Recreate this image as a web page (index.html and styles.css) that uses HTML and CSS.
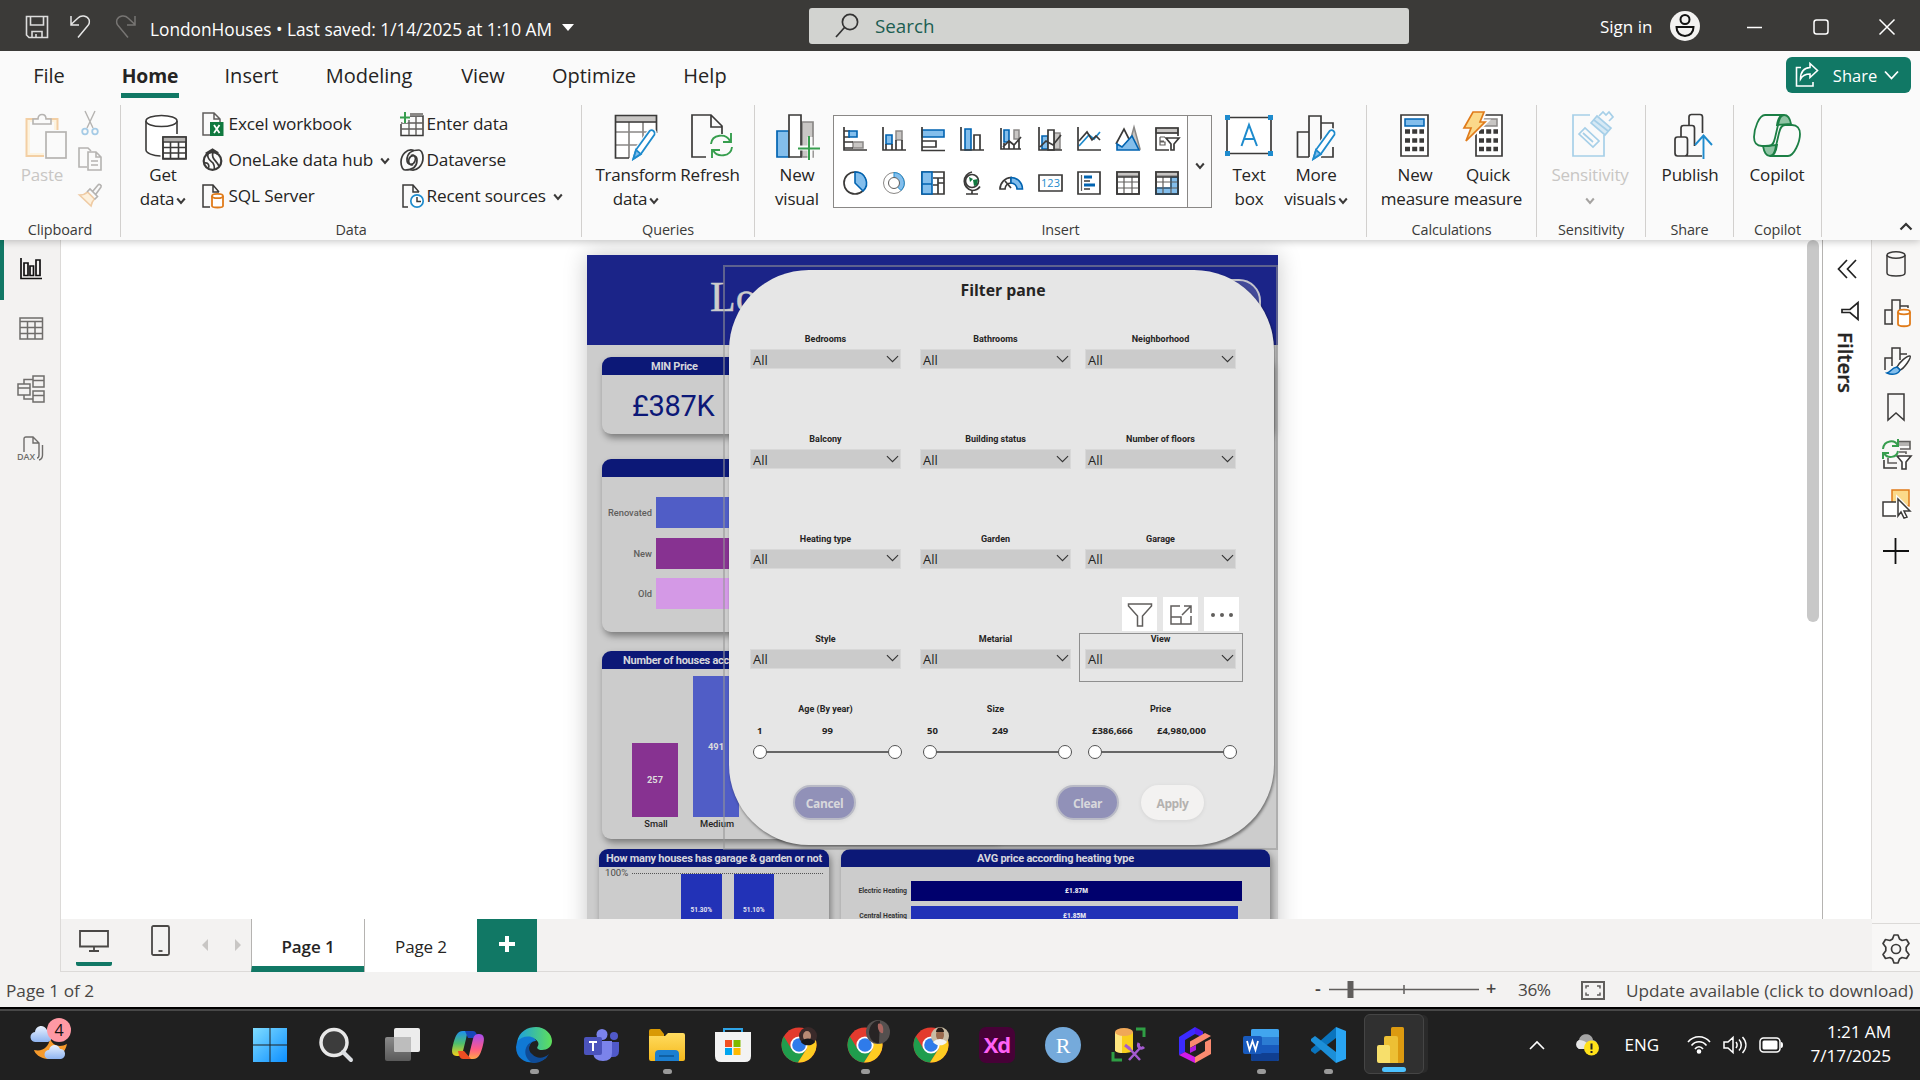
FILE: index.html
```html
<!DOCTYPE html>
<html lang="en">
<head>
<meta charset="utf-8">
<title>LondonHouses</title>
<link rel="stylesheet" href="styles.css">
</head>
<body>
<svg width="0" height="0" class="defs">
  <defs>
    <symbol id="chev" viewBox="0 0 10 8"><path d="M1.200 1.500 5 6l3.800-4.500" fill="none" stroke="currentColor" stroke-width="2"/></symbol>
    <symbol id="drop" viewBox="0 0 14 8"><path d="M1 .8 7 6.800l6-6" fill="none" stroke="#333" stroke-width="1.200"/></symbol>
    <symbol id="chrome" viewBox="0 0 36 36">
      <circle cx="18" cy="18" r="17.500" fill="#e33b2e"/>
      <path d="M2.800 9.300A17.500 17.500 0 0 0 17 35.500L25.500 22l-15 0z" fill="#1f9d4d"/>
      <path d="M33.200 9.500A17.500 17.500 0 0 1 17 35.500l8.600-13.400L26 9.500z" fill="#fdcc22"/>
      <circle cx="18" cy="18" r="8.600" fill="#fff"/><circle cx="18" cy="18" r="6.800" fill="#2f7bea"/>
    </symbol>
    <symbol id="pencil" viewBox="0 0 24 32"><path d="M2 30 4.500 21.500 17.500 3.500a3 3 0 0 1 4.400 3.600L9 25.500z" fill="#fafafa" stroke="#fafafa" stroke-width="4"/><path d="M2 30 4.500 21.500 17.500 3.500a3 3 0 0 1 4.400 3.600L9 25.500z" fill="#fff" stroke="#1e8bcd" stroke-width="1.700"/><path d="M2 30l2.500-8.500L9 25.500z" fill="#83beec" stroke="#1e8bcd"/></symbol>
    <linearGradient id="gw" x1="0" y1="0" x2="1" y2="1"><stop offset="0" stop-color="#7fdcff"/><stop offset="1" stop-color="#0d8fff"/></linearGradient>
    <linearGradient id="ge" x1="0" y1="0" x2="1" y2="0"><stop offset="0" stop-color="#1c9fe0"/><stop offset="1" stop-color="#5fe05a"/></linearGradient>
    <linearGradient id="gf" x1="0" y1="0" x2="0" y2="1"><stop offset="0" stop-color="#ffdc60"/><stop offset="1" stop-color="#f5b91c"/></linearGradient>
    <linearGradient id="gc1" x1="0" y1="0" x2="0" y2="1"><stop offset="0" stop-color="#1d8ff0"/><stop offset=".5" stop-color="#4fbf6c"/><stop offset="1" stop-color="#f5d119"/></linearGradient>
    <linearGradient id="gc2" x1="0" y1="0" x2="0" y2="1"><stop offset="0" stop-color="#a54df0"/><stop offset=".6" stop-color="#ff5a86"/><stop offset="1" stop-color="#ffa648"/></linearGradient>
    <linearGradient id="gcloud" x1="0" y1="0" x2="0" y2="1"><stop offset="0" stop-color="#e8f2ff"/><stop offset="1" stop-color="#8fb4f0"/></linearGradient>
    <linearGradient id="gtask" x1="0" y1="0" x2="0" y2="1"><stop offset="0" stop-color="#8a8a8a"/><stop offset="1" stop-color="#5a5a5a"/></linearGradient>
  </defs>
</svg>

<header class="titlebar">
  <div class="quick">
    <svg width="24" height="24" viewBox="0 0 24 24" fill="none" stroke="#dcdcdc" stroke-width="1.600"><path d="M1.500 1.500h21v21H4l-2.500-2.500z M5.500 1.500v8.500h13V1.500 M7 22.500v-6h10v6 M11 22v-3"/></svg>
    <svg width="24" height="24" viewBox="0 0 24 24" fill="none" stroke="#e6e6e6" stroke-width="1.500"><path d="M2 1v9h8 M2 9.500 9 3C12-.3 18 .5 20 4.500c1 3 0 5-1.500 6.500L9 22.500"/></svg>
    <svg width="24" height="24" viewBox="0 0 24 24" fill="none" stroke="#777573" stroke-width="1.500"><path d="M22 1v9h-8 M22 9.500 15 3C12-.3 6 .5 4 4.500c-1 3 0 5 1.500 6.500L15 22.500"/></svg>
  </div>
  <div class="doc-name">LondonHouses • Last saved: 1/14/2025 at 1:10 AM</div>
  <svg class="doc-caret" width="12" height="8"><path d="M0 0h12L6 7z" fill="#fff"/></svg>
  <div class="search">
    <svg width="26" height="26" viewBox="0 0 26 26" fill="none" stroke="#333" stroke-width="1.700"><circle cx="16" cy="9" r="7.600"/><path d="M10.500 14.500 2 24"/></svg>
    <span>Search</span>
  </div>
  <div class="signin">Sign in</div>
  <svg class="avatar" width="30" height="30" viewBox="0 0 30 30"><circle cx="15" cy="15" r="15" fill="#f3f2f1"/><g fill="none" stroke="#111" stroke-width="2"><circle cx="15" cy="8.500" r="4.500"/><path d="M6.500 16h17c0 5.500-3.500 9-8.500 9s-8.500-3.500-8.500-9z"/></g></svg>
  <div class="winbtns">
    <svg width="16" height="18"><path d="M0 9.500h15" stroke="#fff" stroke-width="1.500"/></svg>
    <svg width="16" height="18"><rect x="1" y="2" width="14" height="14" rx="2.500" fill="none" stroke="#fff" stroke-width="1.500"/></svg>
    <svg width="16" height="18"><path d="M.5 1.500l15 15M15.500 1.500.5 16.500" stroke="#fff" stroke-width="1.500"/></svg>
  </div>
</header>

<nav class="tabs">
  <a>File</a><a class="on"><span>Home</span></a><a>Insert</a><a>Modeling</a><a>View</a><a>Optimize</a><a>Help</a>
  <div class="share">
    <svg width="24" height="26" viewBox="0 0 24 26" fill="none" stroke="#fff" stroke-width="1.600"><path d="M6 5.500H1.500V24H18v-4"/><path d="M15 1.500l7.500 7L15 15.500V12c-5 0-7.500 1.500-9.500 5 0-6.500 3-11 9.500-11.500z"/></svg>
    <span>Share</span>
    <svg width="15" height="10"><path d="M1 1.500 7.500 8.500 14 1.500" fill="none" stroke="#fff" stroke-width="1.800"/></svg>
  </div>
</nav>

<section class="ribbon">
  <div class="group g-clip">
    <div class="tools">
      <div class="big off w72">
        <svg class="nudge" width="48" height="48" viewBox="0 0 48 48" fill="none"><path d="M5.500 8h31v37h-31z" fill="#fdf3df" stroke="#f3cfa4" stroke-width="2"/><path d="M9 11h24v31H9z" fill="#fafafa"/><path d="M12 13V8h5c0-6 8-6 8 0h5v5z" fill="#fafafa" stroke="#b5b3b1" stroke-width="1.600"/><path d="M23 19h24v29H23z" fill="#fafafa"/><rect x="25" y="21" width="20" height="26" fill="#fafafa" stroke="#b5b3b1" stroke-width="1.700"/></svg>
        <span>Paste</span>
      </div>
      <div class="minis">
        <svg width="24" height="24" viewBox="0 0 24 24" fill="none" stroke="#b5b3b1" stroke-width="1.400"><path d="M7 0l8 17M17 0 9 17"/><circle cx="7" cy="20.500" r="2.800" stroke="#a6cbe6" stroke-width="1.800"/><circle cx="17" cy="20.500" r="2.800" stroke="#a6cbe6" stroke-width="1.800"/></svg>
        <svg width="24" height="24" viewBox="0 0 24 24" fill="none" stroke="#b5b3b1" stroke-width="1.600"><path d="M9 20H1V1h9l3 3"/><path d="M10 5h8l5 5v13H10zM18 5v5h5M13 14h7M13 18h7" fill="#fafafa"/></svg>
        <svg width="24" height="24" viewBox="0 0 24 24" fill="none" stroke="#b5b3b1" stroke-width="1.600"><path d="M1.500 12c4 0 6-1 8-3l7 7c-2 2-3 4-3.500 7z" fill="#fdf0dc" stroke="#efcba4"/><path d="M9 9l3-3 7.500 7.500-3 3M15 8l5-6c1-1.500 4 0 3 2l-5 7"/></svg>
      </div>
    </div>
    <div class="gname">Clipboard</div>
  </div>

  <div class="group g-data">
    <div class="tools">
      <div class="big w72">
        <svg class="nudge" width="48" height="48" viewBox="0 0 48 48" fill="none" stroke="#3b3a39" stroke-width="1.600"><path d="M4 10v29c0 3 7 6 14.500 6h16.500V10" fill="#fff" stroke="none"/><path d="M35 23V10M4 10v29c0 3 7 6 14.500 6"/><ellipse cx="19.500" cy="10" rx="15.500" ry="5.500" fill="#fff"/><path d="M21 26h23v22H21z" fill="#fff"/><path d="M21 28.500h23" stroke="#b5b3b1" stroke-width="4"/><path d="M21 26h23v21.500H21zM21 31h23M21 36.500h23M21 42h23M28.500 31v17M36.500 31v17"/></svg>
        <span>Get</span><span>data<svg class="chev"><use href="#chev"/></svg></span>
      </div>
      <div class="rows">
        <div class="row"><svg width="24" height="24" viewBox="0 0 24 24" fill="none"><path d="M8 23H1V1h11l6 6v3M12 1v6h6" stroke="#605e5c" stroke-width="1.500"/><path d="M8 10h13.500v14H8z" fill="#10793f"/><path d="M12 13l5.500 8M17.500 13 12 21" stroke="#fff" stroke-width="1.800"/></svg><span>Excel workbook</span></div>
        <div class="row"><svg width="24" height="24" viewBox="0 0 24 24" fill="none" stroke="#3b3a39"><path d="M5 4h18v19.500H1V12" stroke-width="1.500"/><path d="M10 2.500h13" stroke="#8a8886" stroke-width="3"/><path d="M1 11h22M1 17h22M9 6v17M16 5v18" stroke="#605e5c" stroke-width="1.400"/><path d="M5 0v11M0 5.500h10" stroke="#fafafa" stroke-width="5"/><path d="M5 0v11M0 5.500h10" stroke="#379e4e" stroke-width="2"/></svg><span>Enter data</span></div>
        <div class="row"><svg width="24" height="24" viewBox="0 0 24 24" fill="none" stroke="#3b3a39"><circle cx="10.500" cy="13" r="8.800" stroke-width="2.200"/><path d="M4 6l6.500-4 5.500 3.500" stroke-width="3"/><path d="M6 5c-1.500 7 3.500 8 5 10 1 1.500 1.500 4 1.500 6M11 4c-2 7 3 8 6 14M2.500 15c4-1 5 3 4 5" stroke-width="1.700"/></svg><span>OneLake data hub<svg class="chev"><use href="#chev"/></svg></span></div>
        <div class="row"><svg width="24" height="24" viewBox="0 0 24 24" fill="none" stroke="#3b3a39" stroke-width="1.700"><path d="M14 2.500C7 0 1 7 1 14c0 5 2 8 4 8 8 0 12-4 12-10 0-5-6-6-8-1-1.500 4 1 7 4 5.500"/><path d="M10 21.500c7 2.500 13-4.500 13-11.500 0-5-2-8-4-8-8 0-12 4-12 10 0 5 6 6 8 1 1.500-4-1-7-4-5.500"/></svg><span>Dataverse</span></div>
        <div class="row"><svg width="24" height="24" viewBox="0 0 24 24" fill="none"><path d="M8 23H1V1h10l6 7M11 1v7h6" stroke="#3b3a39" stroke-width="1.500"/><path d="M10 12v10c0 2 11 2 11 0V12" fill="#fff" stroke="#e07b1a" stroke-width="1.800"/><ellipse cx="15.500" cy="12" rx="5.500" ry="2.200" fill="#fff" stroke="#e07b1a" stroke-width="1.800"/></svg><span>SQL Server</span></div>
        <div class="row"><svg width="24" height="24" viewBox="0 0 24 24" fill="none"><path d="M8 23H3V1h10l6 7M13 1v7h6" stroke="#3b3a39" stroke-width="1.500"/><circle cx="17" cy="17" r="6.200" fill="#fff" stroke="#1e8bcd" stroke-width="1.700"/><path d="M17 13v4.500h4" stroke="#3b3a39" stroke-width="1.500"/></svg><span>Recent sources<svg class="chev"><use href="#chev"/></svg></span></div>
      </div>
    </div>
    <div class="gname">Data</div>
  </div>

  <div class="group g-query">
    <div class="tools">
      <div class="big w88">
        <svg width="48" height="48" viewBox="0 0 48 48" fill="none" stroke="#3b3a39" stroke-width="1.700"><path d="M3.500 4.500h41V47h-41z" fill="#fff" stroke="none"/><path d="M3.500 8h41" stroke="#c8c6c4" stroke-width="7"/><path d="M3.500 21h41M3.500 34h30M17 11v36M31 11v26" stroke="#8a8886"/><path d="M44.500 22V4.500h-41V47H17M3.500 11h41"/><path d="M22 48h24V24z" fill="#fafafa" stroke="none"/><use href="#pencil" x="16" y="16" width="32" height="34"/></svg>
        <span>Transform</span><span>data<svg class="chev"><use href="#chev"/></svg></span>
      </div>
      <div class="big w62">
        <svg width="48" height="48" viewBox="0 0 48 48" fill="none" stroke="#3b3a39" stroke-width="1.700"><path d="M20 46H6V4h19l11 11v8M25 4v12h11"/><path d="M25 33c1-10 15-11 19-3M46 36c-1 10-15 11-19 3M45 22v9h-8M26 47v-8h8" stroke="#379e4e" stroke-width="1.900"/></svg>
        <span>Refresh</span>
      </div>
    </div>
    <div class="gname">Queries</div>
  </div>

  <div class="group g-insert">
    <div class="tools">
      <div class="big w72">
        <svg width="48" height="48" viewBox="0 0 48 48" fill="none" stroke="#3b3a39" stroke-width="1.700"><path d="M29 11h11v35H29z" fill="#c8c6c4" stroke="#8a8886"/><path d="M4 20h12v26H4z" fill="#83beec" stroke="#0063b1"/><path d="M16 4h12v42H16z" fill="#fff"/><path d="M37 26v22M26 37h21" stroke="#fafafa" stroke-width="5"/><path d="M36 25v24M25 37.500h22" stroke="#379e4e" stroke-width="2"/></svg>
        <span>New</span><span>visual</span>
      </div>
      <div class="gallery">
        <div class="gallery-grid">
          <svg viewBox="0 0 24 24"><path d="M7 4H1M7 10H1" class="d"/><path d="M6 4h8v6H6z" class="b"/><path d="M10 15h10v6H10z" class="g"/><path d="M10 15H1M10 21H1M1 0v23h23" class="d"/></svg>
          <svg viewBox="0 0 24 24"><path d="M4 8h6v9H4z" class="b"/><path d="M14 4h6v9h-6z" class="g"/><path d="M4 17v6M10 17v6M14 13v10M20 13v10M1 0v23h23" class="d"/></svg>
          <svg viewBox="0 0 24 24"><path d="M1 3h22v7H1z" class="b"/><path d="M1 14h14v6H1zM1 0v23.500h23" class="d"/></svg>
          <svg viewBox="0 0 24 24"><path d="M5 2h6v21H5z" class="b"/><path d="M14 8h6v15h-6zM1 0v23h23" class="d"/></svg>
          <svg viewBox="0 0 24 24"><path d="M5 3h5v12H5z" class="b"/><path d="M15 3h5v9h-5z" class="g"/><path d="M2 1v21h20M5 16v6M10 15v7M15 18v4M20 12v10M4 20l6-6 5 4 7-8" class="d"/></svg>
          <svg viewBox="0 0 24 24"><path d="M4 9h6v13H4z" class="b"/><path d="M16 6h6v16h-6z" class="g"/><path d="M10 3h6v20h-6z" class="d" fill="#fff"/><path d="M1 0v23h23M2 20l6-6 7 4 8-10" class="d"/></svg>
          <svg viewBox="0 0 24 24"><path d="M2 19 12 8l5 4 6-7" class="lb"/><path d="M2 14 10 5l5 8 4-4 4 4" class="d"/><path d="M1 0v23h23" class="d"/></svg>
          <svg viewBox="0 0 24 24"><path d="M18 0l6 22H12z" class="g"/><path d="M0 17 8 2l9 18" class="d" fill="#fff"/><path d="M1 23V17l5 3L16 9l7 14z" class="b"/></svg>
          <svg viewBox="0 0 24 24"><path d="M1 1h22v5H1z" class="g"/><path d="M14 23H1V1h22v8M1 6h22" class="d"/><path d="M5 10h5M5 10v4h4M5 18h5v-3H5z" class="d thin"/><path d="M11 11h13l-5 6v6h-3v-6z" class="d" fill="#fff"/></svg>
          <svg viewBox="0 0 24 24"><circle cx="12" cy="12" r="11" class="d" fill="#fff"/><path d="M12 12V1a11 11 0 0 1 8 19z" class="b"/></svg>
          <svg viewBox="0 0 24 24"><circle cx="12" cy="12" r="10.500" fill="#fff" stroke="#8a8886"/><path d="M12 1.500a10.500 10.500 0 0 1 7 18l-4-4A5.500 5.500 0 0 0 12 6.500z" fill="#83beec" stroke="#1e8bcd"/><circle cx="12" cy="12" r="5.500" fill="#fff" stroke="#605e5c"/></svg>
          <svg viewBox="0 0 24 24"><path d="M1 1h22v22H1z" class="d" fill="#fff"/><path d="M1 1h10v22H1zM1 13h10" class="b"/><path d="M12 7h11M17 7v16M12 14h5M17 12h6" class="d"/></svg>
          <svg viewBox="0 0 24 24"><circle cx="12" cy="10" r="6.500" class="d" fill="#fff"/><path d="M9 6l4 2-3 3zM13 9l5-1-1 6-3 1z" fill="#10793f"/><path d="M12 1a10 9.500 0 0 0 0 18.500c4 0 6-1 8-4M12 19v4M6 23h12" class="d"/></svg>
          <svg viewBox="0 0 24 24"><path d="M1 18A11.500 11.500 0 0 1 12 6.500v5.500a6 6 0 0 0-6 6z" class="d" fill="#fff"/><path d="M12 6.500A11.500 11.500 0 0 1 23.500 18H18a6 6 0 0 0-6-6z" class="b"/><path d="M12 17 6 10" class="d"/></svg>
          <svg viewBox="0 0 24 24"><path d="M1 4h23v16H1z" class="d" fill="#fff"/><text x="12.500" y="16" class="t123">123</text></svg>
          <svg viewBox="0 0 24 24"><path d="M1 1h22v22H1z" class="d" fill="#fff"/><path d="M4.500 4v16" class="d thin"/><path d="M7 6h8M7 14h11" stroke="#0063b1" stroke-width="3"/><path d="M7 10h6M7 18h6" stroke="#3b3a39" stroke-width="1.500"/></svg>
          <svg viewBox="0 0 24 24"><path d="M1 1h22v22H1z" class="d" fill="#fff"/><path d="M1 1h22v4H1z" class="g"/><path d="M1 11h22M1 17h22M8 6v17M16 6v17" class="d thin"/><path d="M1 6h22M1 1h22v22H1z" class="d"/></svg>
          <svg viewBox="0 0 24 24"><path d="M1 1h22v22H1z" class="d" fill="#fff"/><path d="M16 6h7v17H1v-6h15z" class="b"/><path d="M1 1h22v4H1z" class="g"/><path d="M1 11h22M1 17h22M8 6v17M16 6v17" class="d thin"/><path d="M1 6h22M1 1h22v22H1z" class="d"/></svg>
        </div>
        <div class="gallery-more"><svg class="chev"><use href="#chev"/></svg></div>
      </div>
      <div class="big w74">
        <svg width="48" height="48" viewBox="0 0 48 48" fill="none"><path d="M2 6.500h44v36H2z" fill="#fff" stroke="#3b3a39" stroke-width="1.700"/><path d="M0 4h5v5H0zM43 4h5v5h-5zM0 40h5v5H0zM43 40h5v5h-5z" fill="#1e8bcd"/><path d="M16.500 35 24 14l8 21M19 28h10.500" stroke="#1e8bcd" stroke-width="2"/></svg>
        <span>Text</span><span>box</span>
      </div>
      <div class="big w60">
        <svg class="nudge" width="48" height="48" viewBox="0 0 48 48" fill="none" stroke="#3b3a39" stroke-width="1.700"><path d="M14 46V5h12v30M14 21H2.500v25H14M26 12h12v8M26 46h12V36"/><use href="#pencil" x="13" y="16" width="32" height="34"/></svg>
        <span>More</span><span>visuals<svg class="chev"><use href="#chev"/></svg></span>
      </div>
    </div>
    <div class="gname">Insert</div>
  </div>

  <div class="group g-calc">
    <div class="tools">
      <div class="big w72">
        <svg width="48" height="48" viewBox="0 0 48 48" fill="none"><path d="M10 4h27v41H10z" fill="#fff" stroke="#3b3a39" stroke-width="1.700"/><path d="M14 8h19v7H14z" fill="#83beec" stroke="#0063b1" stroke-width="1.500"/><path d="M14 20.500h19M14 29.500h19M14 38h19" stroke="#3b3a39" stroke-width="4.500" stroke-dasharray="5 2.200"/></svg>
        <span>New</span><span>measure</span>
      </div>
      <div class="big w74">
        <svg width="48" height="48" viewBox="0 0 48 48" fill="none"><path d="M12 4h26v41H12z" fill="#fff" stroke="#3b3a39" stroke-width="1.700"/><path d="M17 8h16v7H15z" fill="#c8c6c4" stroke="#8a8886" stroke-width="1.500"/><path d="M15 20.500h19M15 29.500h19M15 38h19" stroke="#3b3a39" stroke-width="4.500" stroke-dasharray="5 2.200"/><path d="M9 1h11l-4 10h5L2 30l5-13H0z" fill="#fbd98a" stroke="#fafafa" stroke-width="5"/><path d="M9 1h11l-4 10h5L2 30l5-13H0z" fill="#fbd98a" stroke="#e07b1a" stroke-width="1.700"/></svg>
        <span>Quick</span><span>measure</span>
      </div>
    </div>
    <div class="gname">Calculations</div>
  </div>

  <div class="group g-sens">
    <div class="tools">
      <div class="big off w88">
        <svg width="48" height="48" viewBox="0 0 48 48" fill="none" stroke="#a6cfe8" stroke-width="1.700"><path d="M24 4H7v41h31V24"/><path d="M13 23l6-6 14 13-6 6zM17 22l10 9"/><path d="M25 12l6-7 14 12-6 7zM28 9l14 11" fill="#d6e9f5"/><path d="M33 5l4-4 3 3 3-3 4 5-4 4"/></svg>
        <span>Sensitivity</span><span><svg class="chev"><use href="#chev"/></svg></span>
      </div>
    </div>
    <div class="gname">Sensitivity</div>
  </div>

  <div class="group g-pub">
    <div class="tools">
      <div class="big w72">
        <svg width="48" height="48" viewBox="0 0 48 48" fill="none" stroke="#3b3a39" stroke-width="1.700"><path d="M9 28.500q0-2.500 2.500-2.500H19q2.500 0 2.500 2.500V42M15 26V17q0-2.500 2.500-2.500H26q2.500 0 2.500 2.500v18M23 14V6q0-2.500 2.500-2.500H34q2.500 0 2.500 2.500v16M9 28v14q0 3 2.500 3H36M21.500 42q0 3-2.500 3"/><path d="M37.500 48V25M29 34l8.500-9.500L46 34" stroke="#1e8bcd" stroke-width="1.900"/></svg>
        <span>Publish</span>
      </div>
    </div>
    <div class="gname">Share</div>
  </div>

  <div class="group g-cop">
    <div class="tools">
      <div class="big w72">
        <svg width="48" height="48" viewBox="0 0 48 48" fill="none" stroke="#1c7f45" stroke-width="1.800"><path d="M24 14C25 7 27 4 31 4c4 0 6 3 7 9z" fill="#8fc4a4"/><path d="M24 34C23 42 21 45 17 45c-4 0-6-4-7-10z" fill="#8fc4a4"/><path d="M31 4H12C6 4 1 18 1 26c0 6 3 9 8 9h7c4 0 5-4 6-8l3-13c1-6 3-10 6-10z"/><path d="M17 45h18c6 0 12-14 12-22 0-6-3-9-8-9h-7c-4 0-5 4-6 8l-3 13c-1 6-3 10-6 10z"/></svg>
        <span>Copilot</span>
      </div>
    </div>
    <div class="gname">Copilot</div>
  </div>
  <div class="collapse"><svg width="14" height="9"><path d="M1.500 7.500 7 2l5.500 5.500" fill="none" stroke="#333" stroke-width="2.200"/></svg></div>
</section>

<main class="work">
  <aside class="rail-left">
    <div class="view on"><svg width="22" height="22" viewBox="0 0 22 22" fill="none" stroke="#111" stroke-width="1.700"><path d="M1 0v20.500h21M4 5h4v12.500H4zM10 8h3.500v9.500H10zM16 2h4v15.500h-4z"/></svg></div>
    <div class="view"><svg width="24" height="24" viewBox="0 0 24 24" fill="none" stroke="#6f6d6b" stroke-width="1.500"><path d="M1 1h22.500v21H1zM1 4.500h22.500M1 10.500h22.500M1 16.500h22.500M8.500 4.500v17.500M16 4.500v17.500"/></svg></div>
    <div class="view"><svg width="28" height="28" viewBox="0 0 28 28" fill="none" stroke="#6f6d6b" stroke-width="1.500"><path d="M16 1h11v11H16zM16 5.500h11M16 16h11v11H16zM16 20.500h11M1 9h12v11H1zM1 13h12M7 9V4.500h9M7 20v4h9"/></svg></div>
    <div class="view"><svg width="28" height="26" viewBox="0 0 28 26" fill="none" stroke="#6f6d6b" stroke-width="1.400"><path d="M7 16V3q0-2 2-2h7l6 6v12q0 3-2 3M16 1v6h6M25.500 9v10q0 4-3.500 5"/><text x="0" y="24" class="dax">DAX</text></svg></div>
  </aside>

  <div class="stage">
    <div class="viewport">
      <div class="canvas">
        <div class="report">
          <div class="banner"><span>London houses</span><i class="banner-btn"></i></div>
          <div class="cards">
            <div class="card min"><h4>MIN Price</h4><div class="kpi">£387K</div></div>
            <div class="card state"><h4></h4>
              <div class="hbars">
                <span>Renovated</span><i class="c1"></i><span>New</span><i class="c2"></i><span>Old</span><i class="c3"></i>
              </div>
            </div>
            <div class="card size"><h4><span>Number of houses according</span></h4>
              <div class="cols"><div><b class="v1">257</b><span>Small</span></div><div><b class="v2">491</b><span>Medium</span></div></div>
            </div>
          </div>
          <div class="bottom">
            <div class="card garage"><h4>How many houses has garage &amp; garden or not</h4>
              <div class="pct"><span class="axis">100%</span><div class="plot"><b>51.30%</b><b>51.10%</b></div></div>
            </div>
            <div class="card heat"><h4>AVG price according heating type</h4>
              <div class="heat-rows">
                <span>Electric Heating</span><b class="h1">£1.87M</b>
                <span>Central Heating</span><b class="h2">£1.85M</b>
              </div>
            </div>
          </div>
          <div class="selection"></div>
          <div class="pane">
            <h3>Filter pane</h3>
            <div class="slicers">
              <div class="sl"><span>Bedrooms</span><div>All<svg><use href="#drop"/></svg></div></div>
              <div class="sl"><span>Bathrooms</span><div>All<svg><use href="#drop"/></svg></div></div>
              <div class="sl"><span>Neighborhood</span><div>All<svg><use href="#drop"/></svg></div></div>
              <div class="sl"><span>Balcony</span><div>All<svg><use href="#drop"/></svg></div></div>
              <div class="sl"><span>Building status</span><div>All<svg><use href="#drop"/></svg></div></div>
              <div class="sl"><span>Number of floors</span><div>All<svg><use href="#drop"/></svg></div></div>
              <div class="sl"><span>Heating type</span><div>All<svg><use href="#drop"/></svg></div></div>
              <div class="sl"><span>Garden</span><div>All<svg><use href="#drop"/></svg></div></div>
              <div class="sl"><span>Garage</span><div>All<svg><use href="#drop"/></svg></div></div>
              <div class="sl"><span>Style</span><div>All<svg><use href="#drop"/></svg></div></div>
              <div class="sl"><span>Metarial</span><div>All<svg><use href="#drop"/></svg></div></div>
              <div class="sl hovered"><span>View</span><div>All<svg><use href="#drop"/></svg></div>
                <div class="hover-tools">
                  <i><svg width="26" height="26" viewBox="0 0 26 26" fill="none" stroke="#605e5c" stroke-width="1.500"><path d="M1.500 3h23v2l-9 10v10h-5V15l-9-10z"/></svg></i>
                  <i><svg width="24" height="22" viewBox="0 0 24 22" fill="none" stroke="#605e5c" stroke-width="1.500"><path d="M11 3H2v18h20v-8M2 14h10v7M13 12l9-9M15 3h7v7"/></svg></i>
                  <i><svg width="24" height="6" fill="#605e5c"><circle cx="3" cy="4" r="2"/><circle cx="12" cy="4" r="2"/><circle cx="21" cy="4" r="2"/></svg></i>
                </div>
              </div>
              <div class="rg"><span>Age (By year)</span><p><em>1</em><em>99</em></p><div class="track"><i></i><i></i></div></div>
              <div class="rg"><span>Size</span><p><em>50</em><em>249</em></p><div class="track"><i></i><i></i></div></div>
              <div class="rg"><span>Price</span><p><em>£386,666</em><em>£4,980,000</em></p><div class="track"><i></i><i></i></div></div>
            </div>
            <div class="actions"><button>Cancel</button><button class="clear">Clear</button><button class="apply">Apply</button></div>
          </div>
        </div>
      </div>
      <div class="scroll"><i></i></div>
      <div class="filters">
        <svg width="20" height="20" viewBox="0 0 20 20" fill="none" stroke="#222" stroke-width="1.700"><path d="M10 1 1.500 10l8.500 9M19 1l-8.500 9L19 19"/></svg>
        <svg width="18" height="20" viewBox="0 0 18 20" fill="none" stroke="#222" stroke-width="1.700"><path d="M17 1.500v17L9 11.500H1v-3h8z"/></svg>
        <span>Filters</span>
      </div>
    </div>
    <div class="pages">
      <div class="dev on"><svg width="30" height="24" viewBox="0 0 30 24" fill="none" stroke="#4a4846" stroke-width="1.800"><path d="M1 1h28v15.500H1zM15 17v4M10 21h10"/></svg></div>
      <div class="dev"><svg width="20" height="32" viewBox="0 0 20 32" fill="none" stroke="#4a4846" stroke-width="1.800"><rect x="1" y="1" width="17" height="29" rx="1.500"/><path d="M7.500 26h4"/></svg></div>
      <svg class="arrows" width="41" height="14" fill="#c8c6c4"><path d="M7 1v12L1 7zM34 1v12l6-6z"/></svg>
      <div class="tab on">Page 1</div><div class="tab">Page 2</div><div class="add"><svg width="16" height="16"><path d="M8 0v16M0 8h16" stroke="#fff" stroke-width="4"/></svg></div>
    </div>
  </div>

  <aside class="rail-right">
    <svg width="32" height="32" viewBox="0 0 32 32" fill="none" stroke="#3b3a39" stroke-width="1.500"><path d="M7 7v18c0 4 18 4 18 0V7"/><ellipse cx="16" cy="7" rx="9" ry="3.200"/></svg>
    <svg width="32" height="32" viewBox="0 0 32 32" fill="none" stroke="#3b3a39" stroke-width="1.500"><path d="M13 28H5V14h7v14M12 14V4h8v10M20 10h8v2M20 14v14"/><path d="M18 16v12c0 3 12 3 12 0V16" fill="#fff" stroke="#e07b1a" stroke-width="1.800"/><ellipse cx="24" cy="16" rx="6" ry="2.300" fill="#fff" stroke="#e07b1a" stroke-width="1.800"/></svg>
    <svg width="32" height="32" viewBox="0 0 32 32" fill="none" stroke="#3b3a39" stroke-width="1.500"><path d="M5 26V14h7v8M12 14V4h8v12M20 10h7"/><path d="M30 12c2 1-6 13-10 14l-3-3c2-4 10-12 13-11z" fill="#fff"/><path d="M20 26c-2 5-9 5-13 3 4-1 4-5 10-6z" fill="#83beec" stroke="#0063b1"/></svg>
    <svg width="32" height="32" viewBox="0 0 32 32" fill="none" stroke="#3b3a39" stroke-width="1.500"><path d="M8 3h16v26l-8-7-8 7z"/></svg>
    <svg width="32" height="32" viewBox="0 0 32 32" fill="none" stroke="#3b3a39" stroke-width="1.600"><path d="M19 5h11" stroke="#b5b3b1" stroke-width="4"/><path d="M17 2.500h13V10H20M26 15v-2h-7M8 19v5h9" stroke="#605e5c"/><path d="M4 21v8h13"/><path d="M17 17h14l-5 6v7h-4v-7z" fill="#fff"/><path d="M3 10c1-9 12-10 15-3M18 0v7h-6M18 12c-1 7-11 8-14 2M3 20v-6h6" stroke="#379e4e" stroke-width="2"/></svg>
    <svg width="32" height="32" viewBox="0 0 32 32" fill="none" stroke="#3b3a39" stroke-width="1.500"><path d="M12 3h17v16H12z" fill="#fbd98a" stroke="#e07b1a"/><path d="M3 15h15v14H3z" fill="#fff"/><path d="M18 12l12 12h-6l3 6-4 1-2-5-3 3z" fill="#fff" stroke="#faf9f8" stroke-width="4"/><path d="M18 12l12 12h-6l3 6-3 1-3-6-3 4z" fill="#fff"/></svg>
    <svg width="32" height="32" viewBox="0 0 32 32" fill="none" stroke="#111" stroke-width="1.800"><path d="M15.500 3v26M3 16h26"/></svg>
    <div class="gear"><svg width="32" height="32" viewBox="0 0 32 32" fill="none" stroke="#3b3a39" stroke-width="1.700"><path d="M12.500 6 14 2h4l1.500 4 2.500 1.500 4.500-1 2.500 4-2.800 3.700v3.600l2.800 3.700-2.500 4-4.500-1-2.500 1.500L18 30h-4l-1.500-4-2.500-1.500-4.500 1-2.500-4 2.800-3.700v-3.600L3 10.500l2.500-4 4.500 1z" stroke-linejoin="round"/><circle cx="16" cy="16" r="4.500"/></svg></div>
  </aside>
</main>

<footer class="status">
  <span class="pg">Page 1 of 2</span>
  <div class="zoom"><b>-</b><svg width="150" height="18"><path d="M0 8.500h150M75 4v9" stroke="#605e5c" stroke-width="1.500"/><path d="M18.500 0h6v17h-6z" fill="#605e5c"/></svg><b>+</b></div>
  <span class="pc">36%</span>
  <svg class="fit" width="24" height="19" viewBox="0 0 24 19" fill="none" stroke="#605e5c"><path d="M1 1h22v17H1z" stroke-width="2"/><path d="M5 7.500V5h3M16 5h3v2.500M5 11.500V14h3M16 14h3v-2.500" stroke-width="1.500"/></svg>
  <span class="upd">Update available (click to download)</span>
</footer>

<footer class="taskbar">
  <div class="weather"><svg width="44" height="44" viewBox="0 0 44 44"><path d="M20 20c2 8 10 10 17 6-2 10-10 16-20 15C10 40 5 36 4 32c9 2 15-3 16-12z" fill="#f59a2c"/><path d="M6 24a5 5 0 0 1-1-10c1-7 9-8 12-2 6 0 7 10 1 12z" fill="url(#gcloud)"/><path d="M19 41a4.500 4.500 0 0 1 0-9c1-6 9-7 11-1 6-1 7 9 1 10z" fill="url(#gcloud)"/><circle cx="29" cy="12" r="12" fill="#ff99a4"/><text x="29" y="18" class="badge">4</text></svg></div>
  <div class="apps">
    <div class="app"><svg viewBox="0 0 36 36"><path d="M1 1h16.500v16.500H1zM18.500 1H35v16.500H18.500zM1 18.500h16.500V35H1zM18.500 18.500H35V35H18.500z" fill="url(#gw)"/></svg></div>
    <div class="app"><svg viewBox="0 0 36 36"><circle cx="16" cy="15.500" r="13" fill="#3c3c3c" stroke="#e8e8e8" stroke-width="3.500"/><path d="M25 25l8 8" stroke="#dcdfe3" stroke-width="4" stroke-linecap="round"/></svg></div>
    <div class="app"><svg viewBox="0 0 36 36"><rect x="1" y="10" width="26" height="24" rx="2" fill="url(#gtask)"/><rect x="10" y="1" width="26" height="24" rx="2" fill="#ececec"/><path d="M10 10h17v15H12q-2 0-2-2z" fill="#bdbdbd"/></svg></div>
    <div class="app"><svg viewBox="0 0 36 36"><path d="M13 4h8c-4 0-4 4-5 8l-3 12c-1 4-3 5-6 5-5 0-6-4-4-11C5 10 7 4 13 4z" fill="url(#gc1)"/><path d="M15 4h8c3 0 4 3 5 8l-6-1-4 0z" fill="#1747b8"/><path d="M23 32h-8c4 0 4-4 5-8l3-12c1-4 3-5 6-5 5 0 6 4 4 11-2 8-4 14-10 14z" fill="url(#gc2)"/><path d="M21 32h-8c-3 0-4-3-5-8l6 0z" fill="#ee4d22"/></svg></div>
    <div class="app run"><svg viewBox="0 0 36 36"><path d="M1 15C3 4 12 0 20 0c9 0 16 7 16 14 0 6-5 9-10 9-4 0-6-2-4-4 3-6-8-13-21-4z" fill="url(#ge)"/><path d="M1 15c5-7 17-7 19-1-6-1-10 9-5 14 4 5 10 6 16 2C22 39 0 38 0 20z" fill="#1079d4"/><path d="M18 14c-5 2-7 9-2 13 5 5 11 5 17 0-3 6-10 9-15 9-10-2-13-18 0-22z" fill="#0f4c98"/></svg></div>
    <div class="app"><svg viewBox="0 0 36 36"><circle cx="19" cy="7.500" r="5.500" fill="#7b83eb"/><circle cx="31" cy="9" r="4" fill="#5059c9"/><path d="M26 15h10v9q0 6-6 6h-4z" fill="#5059c9"/><path d="M10 14h19v12q0 8-9 8t-10-8z" fill="#7b83eb"/><rect x="1" y="10" width="18" height="18" rx="2" fill="#4b53bc"/><path d="M6 15h8M10 15v9" stroke="#fff" stroke-width="2"/></svg></div>
    <div class="app run"><svg viewBox="0 0 36 36"><path d="M0 4q0-2 2-2h9l4 5v6H0z" fill="#d99a04"/><path d="M0 9h16l3-3h15q2 0 2 2v24q0 2-2 2H2q-2 0-2-2z" fill="url(#gf)"/><path d="M6 34V27q0-4 4-4h16q4 0 4 4v7z" fill="#1c7fd1"/><path d="M10 29h15" stroke="#0b5695" stroke-width="1.500"/></svg></div>
    <div class="app"><svg viewBox="0 0 36 36"><path d="M9 8V2h18v6" fill="none" stroke="#2fa4e7" stroke-width="2"/><path d="M0 5h36v24q0 6-6 6H6q-6 0-6-6z" fill="#f3f3f3"/><path d="M10 13h7v7h-7z" fill="#f25022"/><path d="M18.500 13h7v7h-7z" fill="#7fba00"/><path d="M10 21h7v7h-7z" fill="#00a4ef"/><path d="M18.500 21h7v7h-7z" fill="#ffb900"/></svg></div>
    <div class="app"><svg viewBox="0 0 36 36"><use href="#chrome"/><circle cx="27" cy="9" r="9" fill="#3a2a2a"/><ellipse cx="26" cy="9" rx="4" ry="5" fill="#b98a74"/><path d="M20 15c4-5 11-4 14 0a9 9 0 0 1-14 0z" fill="#17181c"/></svg></div>
    <div class="app run"><svg viewBox="0 0 36 36"><use href="#chrome"/><circle cx="31" cy="5" r="12" fill="#54504f"/><path d="M22 5c1-8 6-12 11-11l-1 22c-5 1-10-4-10-11z" fill="#282425"/><path d="M31-3c4-2 6 3 5 9-3 1-6-4-5-9z" fill="#a9655f"/></svg></div>
    <div class="app"><svg viewBox="0 0 36 36"><use href="#chrome"/><circle cx="27" cy="9" r="9" fill="#c9bca4"/><ellipse cx="27" cy="8" rx="4" ry="5.500" fill="#9a6a4e"/><path d="M23 5c0-6 8-6 8 0z" fill="#241c18"/><path d="M20 15c4-4 10-4 14 0a9 9 0 0 1-14 0z" fill="#f4f4f4"/></svg></div>
    <div class="app"><svg viewBox="0 0 36 36"><rect width="36" height="36" rx="7" fill="#470137"/><text x="18" y="26" class="xd">Xd</text></svg></div>
    <div class="app"><svg viewBox="0 0 36 36"><circle cx="18" cy="18" r="18" fill="#75aadb"/><text x="18" y="26" class="rr">R</text></svg></div>
    <div class="app"><svg viewBox="0 0 36 36"><path d="M4 5v18c0 4 18 4 18 0V5z" fill="#f8cf1c"/><path d="M4 5v18c0 2 4 3 7 3V5z" fill="#ffe680"/><ellipse cx="13" cy="5" rx="9" ry="4" fill="#f0a858"/><path d="M25 2h8v8M2 25v8h9" fill="none" stroke="#2f9e44" stroke-width="3"/><path d="M18 33l12-13M17 20l12 13" fill="none" stroke="#a45ad0" stroke-width="2.500"/><path d="M28 16c-2 4 2 7 5 4M14 18l5 4" fill="none" stroke="#a45ad0" stroke-width="3"/></svg></div>
    <div class="app"><svg viewBox="0 0 36 36"><path d="M18 0v7L8 13v12l-6 3V10z" fill="#3b2bff"/><path d="M18 0l8 4.500v6L18 7z" fill="#4a18f0"/><path d="M2 28l6-3 10 5v6z" fill="#d01be8"/><path d="M18 36l16-9V12l-6 3v9l-10 6z" fill="#fb8a70"/><path d="M34 9 13 21v-6.500L28 6z" fill="#fb8a70"/><path d="M13 21v5l6-3v-5z" fill="#b01be0"/></svg></div>
    <div class="app run"><svg viewBox="0 0 36 36"><rect x="8" y="2" width="28" height="32" rx="2" fill="#2b7cd3"/><path d="M8 10V4q0-2 2-2h24q2 0 2 2v6z" fill="#41a5ee"/><path d="M8 18h28v8H8z" fill="#185abd"/><path d="M8 26h28v6q0 2-2 2H10q-2 0-2-2z" fill="#103f91"/><rect y="9" width="19" height="18" rx="2" fill="#185abd"/><path d="M4 14l2.500 9 3-9 3 9L15 14" fill="none" stroke="#fff" stroke-width="1.800"/></svg></div>
    <div class="app run"><svg viewBox="0 0 36 36"><path d="M26 0 36 4v28l-10 4z" fill="#29a5f3"/><path d="M26 0v11L5 27l-4-3v-2z" fill="#0a74bd"/><path d="M26 36V25L5 9l-4 3v2z" fill="#1c8fd8"/></svg></div>
    <div class="app run active"><svg viewBox="0 0 36 36"><rect x="17" width="13" height="36" rx="1.500" fill="#dc9a10"/><path d="M10 11q0-2 2-2h10q2 0 2 2v25H10z" fill="#edc034"/><path d="M3 20q0-2 2-2h9q2 0 2 2v16H5q-2 0-2-2z" fill="#f7df6b"/></svg></div>
  </div>
  <div class="tray">
    <svg width="16" height="10"><path d="M1 9l7-7 7 7" fill="none" stroke="#fff" stroke-width="1.600"/></svg>
    <svg class="t-cloud" width="26" height="22" viewBox="0 0 26 22"><path d="M5 15a5 5 0 0 1 0-9c2-8 13-7 14 0 6 1 5 9 0 9z" fill="#a5a5a5"/><path d="M5 15a5 5 0 0 1 0-9c6 0 10 4 12 9z" fill="#e6e6e6"/><circle cx="17.500" cy="14" r="7.500" fill="#ffe11a"/><path d="M17.500 9.500v6M17.500 17v2" stroke="#222" stroke-width="2"/></svg>
    <span class="t-lang">ENG</span>
    <svg class="t-wifi" width="24" height="20" viewBox="0 0 24 20" fill="none" stroke="#fff" stroke-width="1.600"><path d="M1 7c6-7 16-7 22 0M4.500 10.500c4-5 11-5 15 0M8 14c2-3 6-3 8 0"/><circle cx="12" cy="16.500" r="1.500" fill="#fff"/></svg>
    <svg class="t-vol" width="24" height="20" viewBox="0 0 24 20" fill="none" stroke="#fff" stroke-width="1.500"><path d="M1 7v6h4l5 4.500v-15L5 7zM13 7c1.500 2 1.500 4 0 6M16 4.500c3 3 3 8 0 11M19.500 2c4.500 5 4.500 11 0 16"/></svg>
    <svg class="t-bat" width="25" height="16" viewBox="0 0 25 16"><rect x="1" y="1" width="20" height="14" rx="3.500" fill="none" stroke="#fff" stroke-width="1.500"/><rect x="3.500" y="3.500" width="15" height="9" rx="1.500" fill="#fff"/><path d="M22 5q2 0 2 3t-2 3z" fill="#fff"/></svg>
    <div class="clock"><span>1:21 AM</span><span>7/17/2025</span></div>
  </div>
</footer>
</body>
</html>
```
FILE: styles.css
```css
* { box-sizing: border-box; }
body {
  margin: 0; width: 1920px; height: 1080px; overflow: hidden;
  display: flex; flex-direction: column;
  font-family: "Open Sans", "Noto Sans", sans-serif; color: #252423; background: #f3f2f1;
}
svg { display: block; flex: none; overflow: visible; }
.defs { position: absolute; }
h3, h4, p { margin: 0; }
em, i { font-style: normal; }

/* title bar */
.titlebar { display: flex; align-items: center; height: 51px; flex: none; background: #3b3a38; color: #fff; font-size: 17px; white-space: nowrap; }
.quick { display: flex; gap: 20px; width: 125px; margin: 3px 0 0 25px; }
.doc-name { width: 401px; font-size: 17.3px; margin-top: 7px; }
.doc-caret { margin: 5px 0 0 11px; }
.search { display: flex; align-items: center; gap: 15px; width: 600px; height: 36px; margin: 1px 0 0 235px; padding-left: 25px; background: #d2d3d0; border-radius: 3px; color: #1b5e52; font-size: 18.8px; }
.signin { margin-left: 191px; width: 70px; font-size: 17px; margin-top: 2px; }
.winbtns { display: flex; gap: 50px; margin: 3px 0 0 47px; }

/* ribbon tabs */
.tabs { display: grid; grid-template-columns: 96px 106px 97px 138px 90px 132px 90px 1fr; position: relative; z-index: 3; height: 54px; flex: none; padding-left: 1px; background: #fafafa; font-size: 20px; text-align: center; }
.tabs a { line-height: 50px; }
.tabs .on span { display: block; width: 58px; height: 47px; margin: 0 auto; font-weight: 700; font-size: 19.3px; letter-spacing: -.1px; border-bottom: 5px solid #117865; }
.share { display: flex; align-items: center; justify-self: end; width: 125px; height: 36px; margin: 6px 9px 0 0; padding-left: 9px; background: #117865; color: #fff; border-radius: 6px; font-size: 16.5px; }
.share span { width: 46px; margin: 1px 6px 0 13px; }

/* ribbon */
.ribbon { display: flex; height: 135px; flex: none; background: #fafafa; color: #252423; box-shadow: 0 1px 8px rgba(0,0,0,.25); z-index: 2; position: relative; }
.group { display: flex; flex-direction: column; justify-content: space-between; height: 132px; border-right: 1.5px solid #d2d0ce; }
.tools { display: flex; }
.gname { font-size: 14.4px; line-height: 16px; height: 15px; text-align: center; letter-spacing: -.1px; color: #3b3a39; }
.g-clip { width: 121px; } .g-data { width: 461px; } .g-query { width: 173px; } .g-insert { width: 612px; }
.g-calc { width: 170px; } .g-sens { width: 109px; } .g-pub { width: 88px; } .g-cop { width: 88px; }
.g-clip .tools, .g-data .tools { padding-left: 6px; }
.g-query .tools { padding-left: 10px; } .g-insert .tools { padding-left: 6px; } .g-calc .tools { padding-left: 12px; }
.g-sens .tools { padding-left: 9px; } .g-pub .tools { padding-left: 8px; } .g-cop .tools { padding-left: 7px; }
.big { display: flex; flex-direction: column; align-items: center; flex: none; padding-top: 6px; font-size: 17px; letter-spacing: -.2px; white-space: nowrap; }
.big > svg { margin-bottom: 4px; }
.big .nudge { margin-left: 6px; }
.big span { display: flex; align-items: center; height: 24px; line-height: 24px; }
.off { color: #c8c6c4; }
.w60 { width: 60px; } .w62 { width: 60px; } .w72 { width: 72px; } .w74 { width: 74px; } .w88 { width: 88px; }
.chev { width: 10px; height: 8px; margin: 4px 0 0 2px; color: #3b3a39; }
.off .chev { color: #a5a3a1; margin-left: 0; }
.minis { display: flex; flex-direction: column; gap: 12px; padding-top: 6px; }
.rows { display: grid; grid-template-columns: 198px 160px; grid-auto-rows: 36px; padding: 0 0 0 3px; }
.row { display: flex; align-items: center; gap: 2.5px; font-size: 17.2px; letter-spacing: -.15px; white-space: nowrap; }
.row > svg { margin-top: 2px; }
.row span { display: flex; align-items: center; }
.row .chev { margin-left: 7px; }
.gallery { display: flex; width: 379px; height: 93px; margin-top: 10px; border: 1.5px solid #8a8886; background: #fff; }
.gallery-grid { display: grid; grid-template-columns: repeat(9, 39px); grid-auto-rows: 44px; width: 354px; padding: 11px 0 0 9px; border-right: 1px solid #8a8886; }
.gallery-grid svg { width: 24px; height: 24px; fill: none; }
.gallery-more { display: flex; flex: 1; align-items: center; justify-content: center; background: #fafafa; }
.gallery-more .chev { margin: 8px 0 0; }
.d { stroke: #3b3a39; stroke-width: 1.7; }
.d.thin { stroke: #605e5c; stroke-width: 1.2; }
.lb { stroke: #1e8bcd; stroke-width: 1.7; }
.b { fill: #83beec; stroke: #0063b1; stroke-width: 1.6; }
.g { fill: #c8c6c4; stroke: #8a8886; stroke-width: 1.5; }
.t123 { font-size: 11px; fill: #1e8bcd; text-anchor: middle; }
.collapse { margin: 117px 0 0 77px; }

/* work area */
.work { display: flex; height: 732px; flex: none; }
.rail-left { width: 61px; border-right: 1px solid #dcdad8; background: #f3f2f1; }
.view { display: flex; align-items: center; justify-content: center; height: 60px; padding: 0 0 3px 1px; }
.view.on { border-left: 4px solid #117865; padding: 0 3px 2px 0; }
.dax { font-size: 9px; font-weight: 600; fill: #6f6d6b; stroke: none; }
.stage { width: 1811px; display: flex; flex-direction: column; }
.viewport { display: flex; height: 679px; background: #fff; overflow: hidden; }
.canvas { width: 1745px; padding: 15px 0 0 526px; overflow: hidden; }
.report { position: relative; width: 691px; height: 740px; background: #ccc; box-shadow: 0 0 22px rgba(0,0,0,.22); font-family: Roboto, sans-serif; }
.scroll { width: 17px; border-right: 1.5px solid #b5b3b1; }
.scroll i { display: block; width: 12px; height: 382px; margin-left: 1px; border-radius: 6px; background: #c8c8c8; }
.filters { display: flex; flex-direction: column; align-items: center; width: 49px; padding-top: 19px; border-right: 1px solid #dcdad8; }
.filters svg + svg { margin: 22px 0 0 6px; }
.filters span { writing-mode: vertical-rl; margin: 11px 2px 0 0; font-size: 20.5px; line-height: 26px; font-weight: 600; -webkit-text-stroke: .3px; }

/* report page */
.banner { display: flex; justify-content: space-between; height: 90px; padding: 18px 17px 0 123px; background: #1b2488; color: #ccc; font: 42px/48px "Liberation Serif", serif; -webkit-text-stroke: .4px; }
.banner-btn { width: 60px; height: 50px; margin-top: 6px; border: 2px solid #c4c4cc; border-radius: 22px; background: #434a99; }
.cards { display: grid; grid-template-rows: 77px 25px 173px 19px 188px; align-content: start; height: 504px; padding: 12px 0 0 15px; }
.min { grid-row: 1; width: 670px; } .state { grid-row: 3; width: 500px; } .size { grid-row: 5; width: 400px; }
.card { border-radius: 9px; background: #ccc; box-shadow: 2px 4px 7px rgba(0,0,0,.4); overflow: hidden; }
.card h4 { height: 18px; line-height: 20px; background: #0c1877; color: #d6d6dc; font-size: 11px; letter-spacing: -.25px; font-weight: 700; white-space: nowrap; }
.min h4 { padding-left: 49px; }
.size h4 { padding-left: 21px; }
.size h4 span { display: block; width: 112px; overflow: hidden; }
.kpi { padding-left: 30px; font-size: 29px; line-height: 34px; margin-top: 14px; color: #0c1877; letter-spacing: -.3px; }
.hbars { display: grid; grid-template-columns: 50px 360px; grid-auto-rows: 31px; gap: 9.5px 4px; padding-top: 20px; align-items: center; font-size: 9.3px; font-weight: 500; color: #605e5c; text-align: right; }
.hbars i { height: 31px; }
.c1 { background: #505dc6; } .c2 { background: #873291; } .c3 { background: #d499e6; }
.cols { display: flex; gap: 15px; align-items: flex-end; height: 163px; padding-left: 30px; font-size: 9.3px; font-weight: 500; color: #252423; text-align: center; }
.cols > div { width: 46px; white-space: nowrap; }
.cols span { display: flex; justify-content: center; height: 15px; padding-left: 2px; line-height: 13px; }
.cols b { display: flex; align-items: center; justify-content: center; padding-bottom: 1px; color: #dcdcdc; }
.v1 { height: 74px; background: #873291; } .v2 { height: 141px; background: #505dc6; }
.bottom { display: flex; gap: 12px; padding-left: 12px; }
.bottom .card { height: 140px; }
.bottom .garage { width: 230px; } .bottom .heat { width: 429px; }
.bottom h4 { text-align: center; }
.pct { display: flex; padding: 0 6px; color: #4a4a4a; font-size: 9.6px; }
.axis { width: 27px; line-height: 12px; }
.plot { flex: 1; display: flex; gap: 12px; margin-top: 6px; padding-left: 49px; border-top: 1px dotted #555; }
.plot b { width: 40.5px; height: 60px; padding-top: 32px; background: #2232b7; color: #e4e4f0; font-size: 6.5px; line-height: 8px; text-align: center; }
.heat-rows { display: grid; grid-template-columns: 66px 340px; grid-auto-rows: 20px; gap: 5px 4px; padding-top: 14px; align-items: center; font-size: 6.8px; font-weight: 700; text-align: right; color: #333; white-space: nowrap; }
.heat-rows b { height: 20px; line-height: 20px; color: #e4e4f0; text-align: center; font-size: 6.5px; }
.h1 { width: 331px; background: #00006d; } .h2 { width: 327px; background: #2232b7; }
.selection { position: absolute; left: 136px; top: 10px; width: 555px; height: 585px; border: 2px solid rgba(150,150,150,.55); }

/* filter pane overlay */
.pane { position: absolute; left: 142px; top: 15px; width: 545px; height: 575px; border-radius: 80px; background: #e6e6e6; box-shadow: 1px 2px 3px rgba(0,0,0,.45); color: #252423; }
.pane h3 { height: 61px; padding: 7px 0 0 3px; text-align: center; font: 700 15.8px/26px "Open Sans", sans-serif; }
.slicers { display: grid; grid-template-columns: 170px 165px 151px; grid-template-rows: 100px 99.5px 100px 70.5px 69px; padding-left: 21px; }
.sl, .rg { width: 151px; display: flex; flex-direction: column; font-size: 9px; font-weight: 700; text-align: center; position: relative; }
.sl > span, .rg > span { height: 18px; line-height: 16px; }
.sl > div:not(.hover-tools) { display: flex; justify-content: space-between; align-items: center; height: 20px; padding: 1px 1px 0 2px; background: #cbcbcb; border: 1px solid #d8d8d8; font: 13px/18px "Open Sans", sans-serif; }
.sl div > svg { width: 13px; height: 8px; margin-top: -2px; }
.hovered::before { content: ""; position: absolute; left: -6px; top: 2px; width: 162px; height: 48px; border: 1px solid #8f8f8f; }
.sl.hovered::before { height: 47px; }
.hover-tools { position: absolute; left: 37px; top: -34px; display: flex; gap: 6px; }
.hover-tools i { width: 35px; height: 34px; display: flex; align-items: center; justify-content: center; background: #fff; }
.rg p { display: flex; height: 21px; margin: 1px 0 0 2px; text-align: left; font: 700 9.5px/22px "Open Sans", sans-serif; }
.rg em { width: 65px; padding-left: 5px; }
.track { display: flex; justify-content: space-between; align-items: center; width: 149px; margin: 4px 0 0 3px; background: linear-gradient(#666, #666) center / 100% 2px no-repeat; }
.track i { width: 14px; height: 14px; border: 1.5px solid #555; border-radius: 7px; background: #fff; }
.actions { display: flex; padding: 15px 0 0 64px; }
.actions button { width: 63px; height: 35px; padding: 2px 0 0; border: 2px solid #b9bac6; border-radius: 18px; background: #9191b8; color: #d8d8dc; font: 700 12px/28px "Open Sans", sans-serif; letter-spacing: -.4px; box-shadow: 0 1px 4px rgba(0,0,0,.08); }
.actions .clear { margin-left: 200px; }
.actions .apply { margin-left: 22px; background: #f3f2f1; border-color: #f3f2f1; color: #b3b1af; }

/* page tabs */
.pages { display: flex; align-items: center; height: 53px; border-bottom: 1px solid #dcdad8; background: #f3f2f1; font-size: 17px; }
.dev { display: flex; align-items: center; justify-content: center; width: 36px; height: 53px; margin-left: 15px; }
.dev.on { align-items: flex-start; height: 36px; padding-top: 0; margin-top: 6px; border-bottom: 4px solid #117865; border-radius: 2px; }
.dev + .dev { margin-left: 31px; padding-bottom: 9px; }
.arrows { margin: -1px 9px 0 22px; }
.tab { width: 113px; height: 53px; line-height: 55px; text-align: center; background: #fff; border-left: 1px solid #b5b3b1; letter-spacing: -.1px; }
.tab.on { font-weight: 600; border-bottom: 6px solid #117865; }
.add { display: flex; align-items: center; justify-content: center; width: 60px; height: 53px; padding-bottom: 3px; background: #117865; }

.rail-right { display: flex; flex-direction: column; align-items: center; width: 48px; padding: 8px 1px 0 0; background: #f8f7f6; gap: 16px; border-bottom: 1px solid #dcdad8; }
.rail-right > svg:nth-child(n+2) { margin-top: -.2px; }
.gear { display: flex; align-items: center; justify-content: center; width: 48px; height: 48px; margin-top: auto; padding-top: 3px; border-top: 1px solid #dcdad8; }

/* status bar */
.status { display: flex; align-items: center; height: 37px; flex: none; padding-top: 2px; border-bottom: 2px solid #000; color: #484644; font-size: 17.2px; white-space: nowrap; }
.pg { width: 1310px; padding-left: 6px; }
.zoom { display: flex; align-items: center; gap: 7px; width: 180px; margin: -2px 0 0 5px; flex: none; }
.zoom b { font-size: 18px; font-weight: 600; line-height: 20px; width: 7px; margin-top: -4px; }
.pc { margin-left: 23px; width: 63px; margin-top: -3px; letter-spacing: -.4px; }
.fit { margin: -1px 21px 0 0; }

/* taskbar */
.taskbar { display: flex; height: 71px; flex: none; background: #202020; border-top: 2px solid #484848; color: #fff; }
.weather { width: 237px; padding: 7px 0 0 30px; }
.badge { font-size: 16px; text-anchor: middle; fill: #111; }
.apps { display: flex; }
.app { display: flex; justify-content: center; width: 66.1px; height: 69px; padding-top: 15.5px; position: relative; }
.app svg { width: 36px; height: 36px; }
.app.run::after { content: ""; position: absolute; bottom: 6px; left: 29px; width: 9px; height: 5px; border-radius: 3px; background: #9a9a9a; }
.app.active { width: 60px; height: 60px; margin: 3px 0 0 3px; padding-top: 12px; padding-right: 3px; border: 1px solid #454545; border-radius: 6px; background: #303030; box-shadow: 5px 0 0 -1px #2a2a2a; }
.app.active::after { bottom: 1px; left: 17px; width: 24px; background: #4cc2ff; }
.xd { font: 700 22px "Open Sans", sans-serif; letter-spacing: -1px; fill: #ff61f6; text-anchor: middle; }
.rr { font: 22px "Liberation Serif", serif; fill: #fff; text-anchor: middle; }
.tray { display: flex; align-items: center; flex: 1; padding: 0 0 2px 105px; }
.t-cloud { margin-left: 29px; }
.t-lang { width: 36px; margin-left: 25px; font-size: 17px; }
.t-wifi { margin-left: 26px; } .t-vol { margin-left: 12px; } .t-bat { margin-left: 12px; }
.clock { display: flex; flex-direction: column; flex: 1; align-items: flex-end; padding: 0 29px 1px 0; font-size: 17.2px; line-height: 24px; letter-spacing: -.1px; }
```
